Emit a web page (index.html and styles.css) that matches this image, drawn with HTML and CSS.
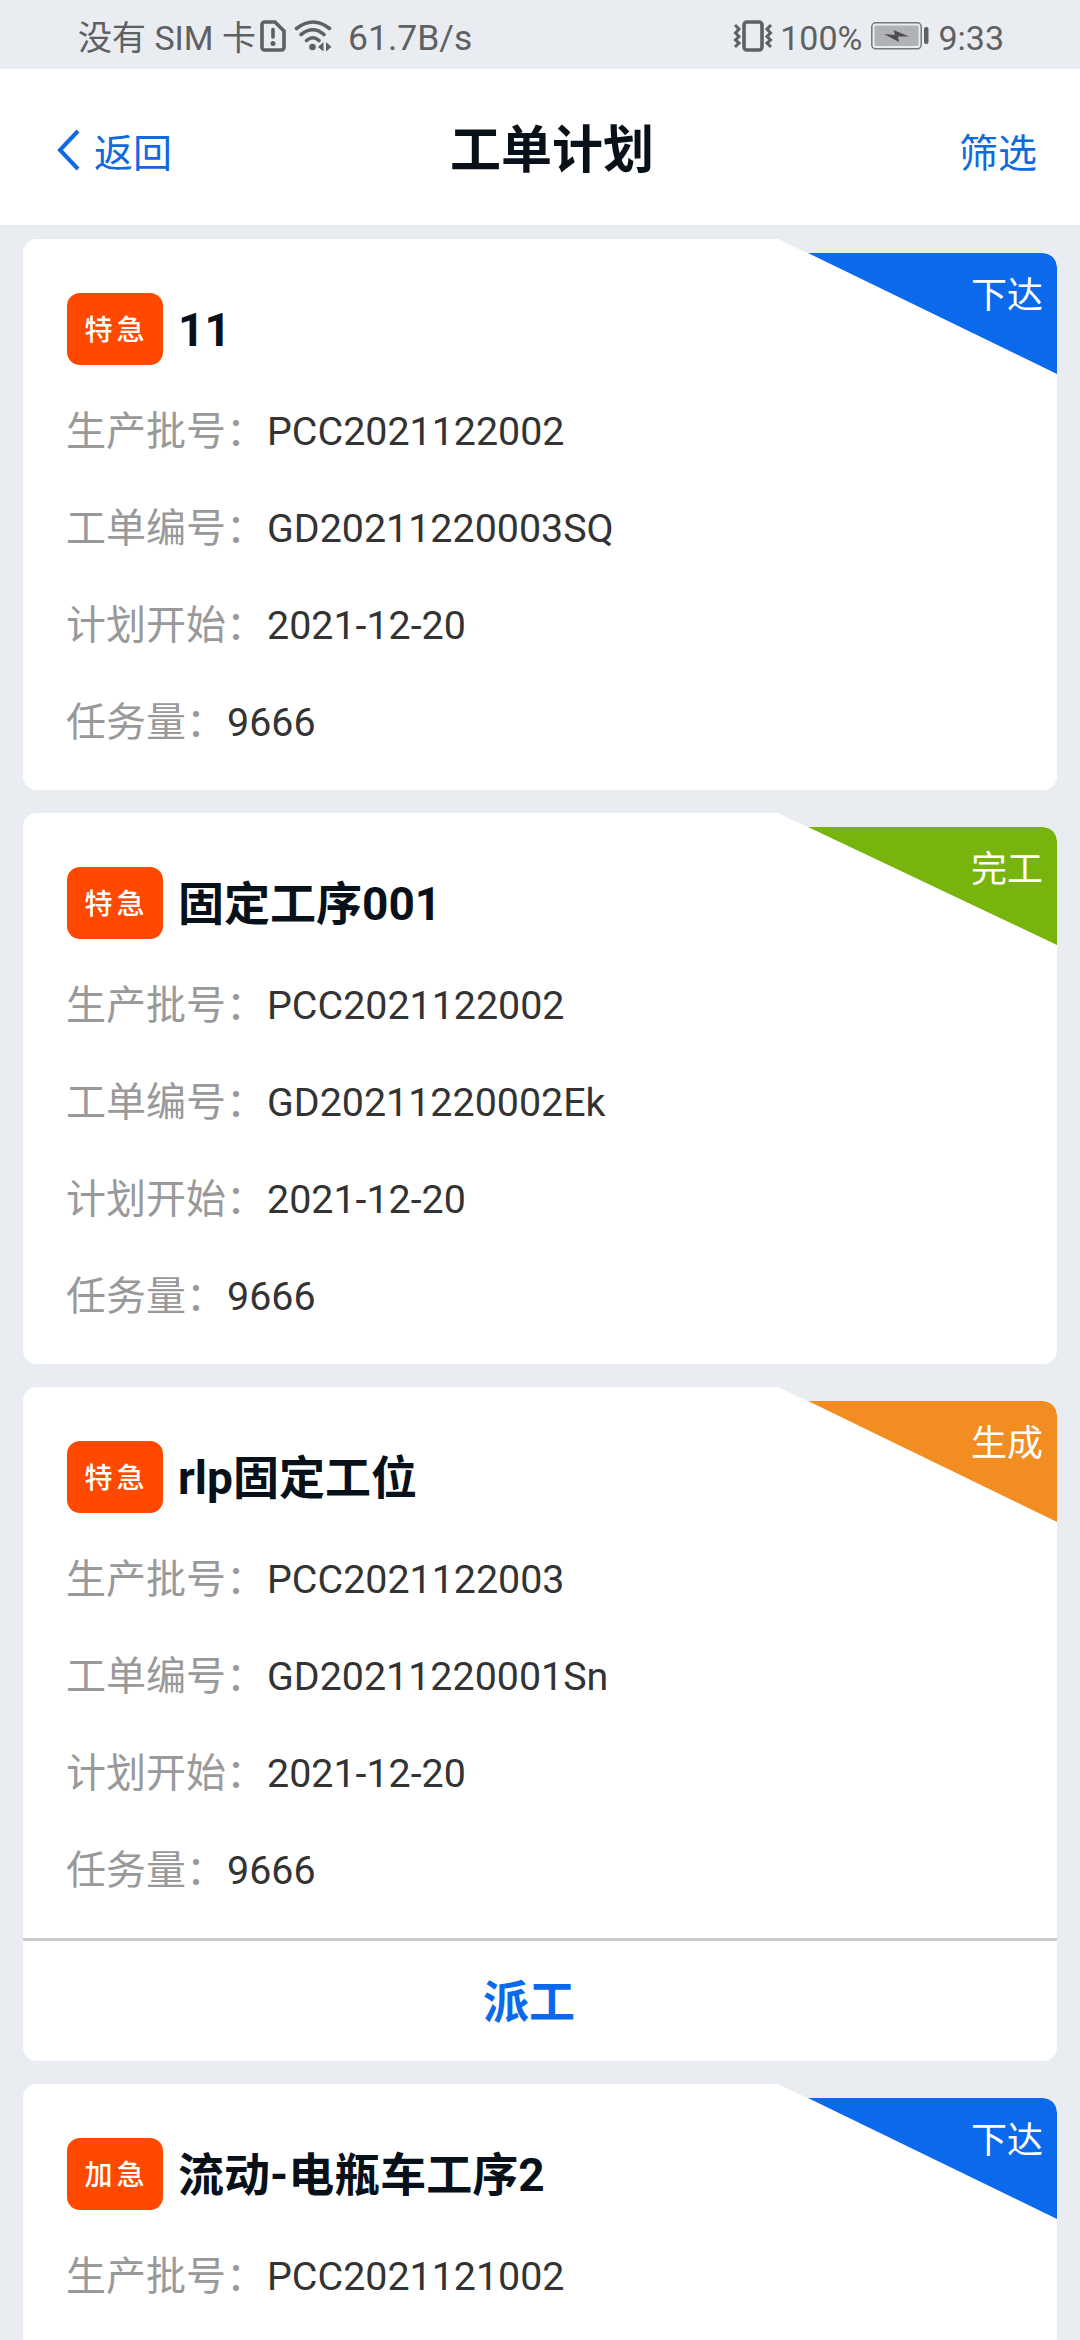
FILE: index.html
```html
<!DOCTYPE html>
<html lang="zh-CN">

<head>
    <meta charset="UTF-8">
    <link rel="stylesheet" href="styles.css">
    <title>工单计划</title>
    <meta name="viewport" content="width=device-width, initial-scale=1">
</head>

<body>
    <div class="wrapper">
        <div class="statusBar">
            <div class="statusLeft">
                <span class="carrier">没有 SIM 卡</span>
                <svg class="simIcon" width="26" height="32" viewBox="0 0 26 32">
                    <path d="M5 2H15L24 11V27Q24 30 21 30H5Q2 30 2 27V5Q2 2 5 2Z" fill="none" stroke="#5f6062" stroke-width="3.6" />
                    <path d="M13 9.5V17" stroke="#5f6062" stroke-width="3.6" stroke-linecap="round" />
                    <circle cx="13" cy="23.5" r="2.5" fill="#5f6062" />
                </svg>
                <svg class="wifiIcon" width="38" height="32" viewBox="0 0 38 32">
                    <g fill="none" stroke="#5f6062" stroke-width="3.6" stroke-linecap="round">
                        <path d="M2.5 8.5Q19 -4.5 35.5 8.5" />
                        <path d="M7 14.5Q19 5 30 14.5" />
                        <path d="M12.5 20.5Q19 15 25 20.5" />
                    </g>
                    <circle cx="18.5" cy="27" r="3.3" fill="#5f6062" />
                    <path d="M24 27L29.5 22V31.5ZM32 22L37.5 27L32 31.5Z" fill="#5f6062" />
                </svg>
                <span class="speed">61.7B/s</span>
            </div>
            <div class="statusRight">
                <svg class="vibrateIcon" width="40" height="32" viewBox="0 0 40 32">
                    <rect x="11" y="2" width="18" height="28" rx="3" fill="none" stroke="#5f6062" stroke-width="3.6" />
                    <path d="M2 5L6 9L2.5 13L6 16.5L2.5 20L6 23L2 27M38 5L34 9L37.5 13L34 16.5L37.5 20L34 23L38 27" fill="none" stroke="#5f6062" stroke-width="3" />
                </svg>
                <span class="percent">100%</span>
                <svg class="batteryIcon" width="58" height="28" viewBox="0 0 58 28">
                    <rect x="0.8" y="0.8" width="49.4" height="26" rx="4" fill="none" stroke="#77787a" stroke-width="1.5" />
                    <rect x="3.5" y="3.5" width="44" height="20.6" rx="1.5" fill="#b1b2b5" />
                    <path d="M13 12L24 13L22.5 8L38 14.5L27 14.5L28 20Z" fill="#4c4d4f" />
                    <rect x="53" y="5" width="4.5" height="17" rx="2" fill="#5f6062" />
                </svg>
                <span class="time">9:33</span>
            </div>
        </div>

        <div class="header">
            <div class="back">
                <svg class="backIcon" width="24" height="42" viewBox="0 0 24 42">
                    <path d="M21 2L3 21L21 40" fill="none" stroke="#0f69df" stroke-width="4" />
                </svg>
                <span>返回</span>
            </div>
            <div class="title">工单计划</div>
            <div class="filter">筛选</div>
        </div>

        <div class="list">
            <div class="card">
                <div class="corner issued">下达</div>
                <div class="cardTitle"><span class="tag">特急</span><span class="name">11</span></div>
                <div class="row"><span class="label">生产批号：</span><span>PCC2021122002</span></div>
                <div class="row"><span class="label">工单编号：</span><span>GD20211220003SQ</span></div>
                <div class="row"><span class="label">计划开始：</span><span>2021-12-20</span></div>
                <div class="row"><span class="label">任务量：</span><span>9666</span></div>
            </div>

            <div class="card">
                <div class="corner done">完工</div>
                <div class="cardTitle"><span class="tag">特急</span><span class="name">固定工序001</span></div>
                <div class="row"><span class="label">生产批号：</span><span>PCC2021122002</span></div>
                <div class="row"><span class="label">工单编号：</span><span>GD20211220002Ek</span></div>
                <div class="row"><span class="label">计划开始：</span><span>2021-12-20</span></div>
                <div class="row"><span class="label">任务量：</span><span>9666</span></div>
            </div>

            <div class="card">
                <div class="corner created">生成</div>
                <div class="cardTitle"><span class="tag">特急</span><span class="name">rlp固定工位</span></div>
                <div class="row"><span class="label">生产批号：</span><span>PCC2021122003</span></div>
                <div class="row"><span class="label">工单编号：</span><span>GD20211220001Sn</span></div>
                <div class="row"><span class="label">计划开始：</span><span>2021-12-20</span></div>
                <div class="row"><span class="label">任务量：</span><span>9666</span></div>
                <div class="dispatch">派工</div>
            </div>

            <div class="card">
                <div class="corner issued">下达</div>
                <div class="cardTitle"><span class="tag">加急</span><span class="name">流动-电瓶车工序2</span></div>
                <div class="row"><span class="label">生产批号：</span><span>PCC2021121002</span></div>
            </div>
        </div>
    </div>
</body>

</html>
```
FILE: styles.css
```css
body {
    margin: 0;
    font-family: Roboto, "Noto Sans CJK SC", sans-serif;
    background: #e9ecf1;
    color: #333;
}

.wrapper {
    height: 2340px;
    overflow: hidden;
}

.statusBar {
    height: 69px;
    padding: 3px 76px 0 78px;
    box-sizing: border-box;
    display: flex;
    justify-content: space-between;
    font-size: 34px;
    line-height: 66px;
    color: #5f6062;
    white-space: nowrap;
}

.statusLeft,
.statusRight {
    display: flex;
    align-items: center;
}

.statusBar span {
    padding-top: 3px;
}

.carrier {
    width: 182px;
}

.wifiIcon {
    margin-left: 8px;
}

.speed {
    margin-left: 16px;
    font-size: 35.5px;
}

.percent {
    margin: 0 9px 0 7px;
}

.time {
    margin-left: 9px;
}

.header {
    height: 156px;
    padding: 0 43px 0 57px;
    box-sizing: border-box;
    background: white;
    display: flex;
    justify-content: space-between;
    align-items: center;
    font-size: 39px;
    color: #0f69df;
}

.back {
    width: 137px;
    display: flex;
    align-items: center;
    gap: 13px;
}

.backIcon {
    margin-top: 5px;
}

.back span,
.filter {
    padding-top: 6px;
}

.filter {
    width: 127px;
    text-align: right;
}

.title {
    padding-bottom: 3px;
    font-size: 51px;
    font-weight: 700;
    color: #08111a;
}

.list {
    padding: 14px 23px;
    display: flex;
    flex-direction: column;
    gap: 23px;
}

.card {
    position: relative;
    min-height: 551px;
    padding: 54px 44px 19px;
    box-sizing: border-box;
    background: white;
    border-radius: 14px;
    clip-path: polygon(0 0, 755px 0, 784px 14px, calc(100% - 14px) 14px, calc(100% - 9px) 15px, calc(100% - 4px) 18px, calc(100% - 1px) 23px, 100% 28px, 100% 100%, 0 100%);
}

/* status ribbon in the top right corner */
.corner {
    position: absolute;
    top: 14px;
    right: 0;
    width: 249px;
    height: 121px;
    padding: 13px 14px 0 0;
    box-sizing: border-box;
    border-top-right-radius: 14px;
    clip-path: polygon(0 0, 100% 0, 100% 100%);
    font-size: 36px;
    line-height: 60px;
    text-align: right;
    color: white;
}

.issued {
    background: #0b69eb;
}

.done {
    height: 118px;
    background: #78b50c;
}

.created {
    background: #f28d22;
}

.cardTitle {
    height: 72px;
    margin-bottom: 18px;
    display: flex;
    align-items: center;
    gap: 15px;
}

.tag {
    width: 96px;
    height: 72px;
    padding-left: 3px;
    box-sizing: border-box;
    border-radius: 13px;
    background: #ff4800;
    color: white;
    font-size: 28px;
    font-weight: 500;
    line-height: 76px;
    letter-spacing: 4px;
    text-align: center;
}

.name {
    padding-top: 2px;
    font-size: 46px;
    font-weight: 700;
    line-height: 72px;
    color: #08111a;
}

.row {
    height: 97px;
    display: flex;
    font-size: 39.4px;
    line-height: 97px;
}

.label {
    margin: 0 1px 0 -1px;
    font-size: 40px;
    color: #999;
}

.dispatch {
    height: 120px;
    margin: 19px -44px -19px;
    padding-right: 22px;
    border-top: 3px solid #ccc;
    font-size: 46px;
    font-weight: 700;
    line-height: 123px;
    text-align: center;
    color: #0b69eb;
}
```
